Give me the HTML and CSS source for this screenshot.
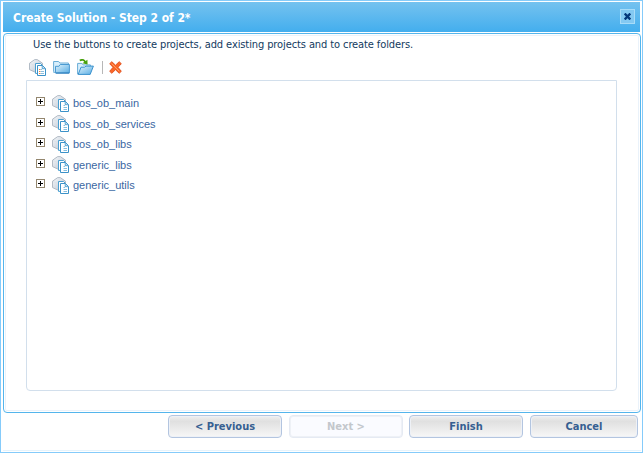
FILE: index.html
```html
<!DOCTYPE html>
<html lang="en">
<head>
<meta charset="utf-8">
<title>Create Solution</title>
<link rel="stylesheet" href="styles.css">
</head>
<body>
<svg width="0" height="0" class="defs">
  <defs>
    <linearGradient id="blue" x1="0" y1="0" x2="1" y2="1"><stop offset="0" stop-color="#dff2fc"/><stop offset="1" stop-color="#58ade3"/></linearGradient>
    <linearGradient id="cube" x1="0" y1="0" x2="1" y2="1"><stop offset="0" stop-color="#f7f9fb"/><stop offset="1" stop-color="#b5c0ce"/></linearGradient>
    <symbol id="project" viewBox="0 0 17 17">
      <path d="M.5 4.2 5.7.6h2.6l5.2 3.6v6L7 13.6.5 10.6z" fill="url(#cube)" stroke="#aab4c0" stroke-width=".9"/>
      <path d="M1 4.5 7 7l6-2.6" fill="none" stroke="#dce2e9"/>
      <path d="M6.5 4.5h5l2 2v7.9h-7z" fill="#fff" stroke="#4a9fd0"/>
      <path d="M8.5 6.5h5l3 3v7h-8z" fill="#fff" stroke="#3c92c8"/>
      <path d="M13.2 6.7v3h3" fill="#b8dff5" stroke="#3c92c8" stroke-width=".8"/>
      <path d="M11.5 10.5H13M11.5 12.5H15M11.5 14.5H15" stroke="#86bfe0"/>
    </symbol>
  </defs>
</svg>
<div class="dialog">
  <header class="titlebar">
    <h1 class="title">Create Solution - Step 2 of 2*</h1>
    <button class="close" aria-label="Close"><svg width="7" height="7" viewBox="0 0 7 7"><path d="M.7.5 6.3 6.5M6.3.5.7 6.5" stroke="#04377b" stroke-width="2.3"/></svg></button>
  </header>
  <main class="panel">
    <p class="hint"><span>Use the buttons to create projects, add existing projects and to create folders.</span></p>
    <div class="toolbar">
      <span class="tool"><svg width="17" height="17"><use href="#project"/><path d="M10 10.5h1.3M10 12.5h1.3M10 14.5h1.3" stroke="#ee8239"/></svg></span>
      <span class="tool"><svg width="17" height="17" viewBox="0 0 17 17">
        <path d="M.6 12.5V2.5h5l1.2 1.5h8.6v9.3H.6z" fill="#d8effc" stroke="#68acd6"/>
        <path d="M7.2 5.5h9.2v8.6H2.5V7.3h3.4z" fill="url(#blue)" stroke="#4a9ad2"/>
        <path d="M3 14h13" stroke="#2879b8"/></svg></span>
      <span class="tool"><svg width="17" height="17" viewBox="0 0 17 17">
        <path d="M.6 15V4.4h4.3l1.2 1.5h7.3v8.6z" fill="#d8effc" stroke="#68acd6"/>
        <path d="M7.5 8.2 9 7.1h7.4l-3.2 8.3H1.2l2.8-7.2z" fill="url(#blue)" stroke="#3c92cd"/>
        <path d="M2.8 1.6C5 .2 7.2.8 8.3 3.2" fill="none" stroke="#48a10d" stroke-width="1.8"/>
        <path d="M5.4 4.2 10.4.8 10.6 5.6z" fill="#48a10d"/></svg></span>
      <span class="divider"></span>
      <span class="tool last"><svg width="13" height="13" viewBox="0 0 13 13">
        <path d="m2.8.7 3.7 3.5L10.2.7l2.1 2L9 6.3l3.3 4-2.1 2-3.7-3.6-3.7 3.6-2.1-2L4 6.3.7 2.7z" fill="#fa6627" stroke="#e04f1c" stroke-width=".9"/>
        <path d="m2.7 2.6 7.6 7.7" stroke="#ffa064"/></svg></span>
    </div>
    <ul class="tree">
      <li><i class="expand"></i><svg width="17" height="17"><use href="#project"/></svg><span>bos_ob_main</span></li>
      <li><i class="expand"></i><svg width="17" height="17"><use href="#project"/></svg><span>bos_ob_services</span></li>
      <li><i class="expand"></i><svg width="17" height="17"><use href="#project"/></svg><span>bos_ob_libs</span></li>
      <li><i class="expand"></i><svg width="17" height="17"><use href="#project"/></svg><span>generic_libs</span></li>
      <li><i class="expand"></i><svg width="17" height="17"><use href="#project"/></svg><span>generic_utils</span></li>
    </ul>
  </main>
  <footer class="actions">
    <button class="btn">&lt; Previous</button>
    <button class="btn" disabled>Next &gt;</button>
    <button class="btn finish">Finish</button>
    <button class="btn cancel">Cancel</button>
  </footer>
</div>
</body>
</html>
```
FILE: styles.css
```css
* { box-sizing: border-box; }
body { margin: 0; background: #fff; overflow: hidden; }
.defs { display: block; }
.dialog {
  width: 643px; height: 453px; padding: 1px 1px 0 2px;
  border: 1px solid #85cbfa;
  font-family: "DejaVu Sans Condensed", "DejaVu Sans", sans-serif;
  font-stretch: condensed;
}
.titlebar {
  display: flex; align-items: center; justify-content: space-between;
  height: 30px; margin-right: 1px; padding: 0 5px 0 10px;
  background: linear-gradient(#75c2ef, #43aeee);
}
.title { margin: 0; padding-top: 1px; font-size: 12px; line-height: 30px; font-weight: bold; letter-spacing: -0.04px; color: #fff; white-space: nowrap; }
.close {
  display: flex; align-items: center; justify-content: center;
  width: 15px; height: 15px; padding: 0; margin-top: -2px;
  border: 1px solid #a8dcf8; background: #84c9f2;
}
.panel {
  height: 380px; margin-top: 1px; padding: 0 23px 0 22px;
  border: 1px solid #54b5ec; border-radius: 4px;
  box-shadow: inset 0 0 0 1px #fff, inset 0 0 0 2px #eaf2fa;
}
.hint { margin: 0; padding: 3px 0 0 7px; height: 23px; font-size: 11px; line-height: 15px; letter-spacing: -0.1px; color: #123a60; white-space: nowrap; }
.toolbar { display: flex; align-items: center; height: 23px; padding: 0 0 2px 3px; }
.tool { width: 24px; height: 18px; display: flex; align-items: center; }
.divider { width: 1px; height: 13px; margin: 0 6px 0 1px; background: #b7b7b7; }
.tree {
  height: 311px; margin: 0; padding: 12px 9px; list-style: none;
  border: 1px solid #d2dfec; border-radius: 0 0 4px 4px;
}
.tree li { display: flex; align-items: center; height: 20.5px; }
.tree svg { margin-left: 7px; }
.tree span { margin-left: 4px; font: 11px/20px "Liberation Sans", Arial, sans-serif; color: #3b67a2; white-space: nowrap; }
.expand {
  width: 9px; height: 9px; margin-top: -3px; border: 1px solid #93866e;
  background: linear-gradient(#000, #000) 1px 3px / 5px 1px no-repeat, linear-gradient(#000, #000) 3px 1px / 1px 5px no-repeat, #fff;
}
.actions { display: flex; justify-content: flex-end; height: 38px; padding: 2px 3px 0 0; border-bottom: 1px solid #e5f3fc; }
.btn {
  width: 114px; height: 23px; margin-right: 7px; padding: 0;
  border: 1px solid #b3c5e0; border-radius: 4px;
  background: linear-gradient(#f0f0f0 0, #e0e0e0 25%, #f7f7f7 100%);
  box-shadow: inset 0 0 0 1px #eef1f6;
  font: bold condensed 11px "DejaVu Sans Condensed", "DejaVu Sans", sans-serif; color: #365f91;
}
.btn:disabled { background: #fafbff; border-color: #e5eaf3; color: #c3c7cc; margin-right: 6px; }
.btn.cancel { width: 108px; margin-right: 0; }
```
